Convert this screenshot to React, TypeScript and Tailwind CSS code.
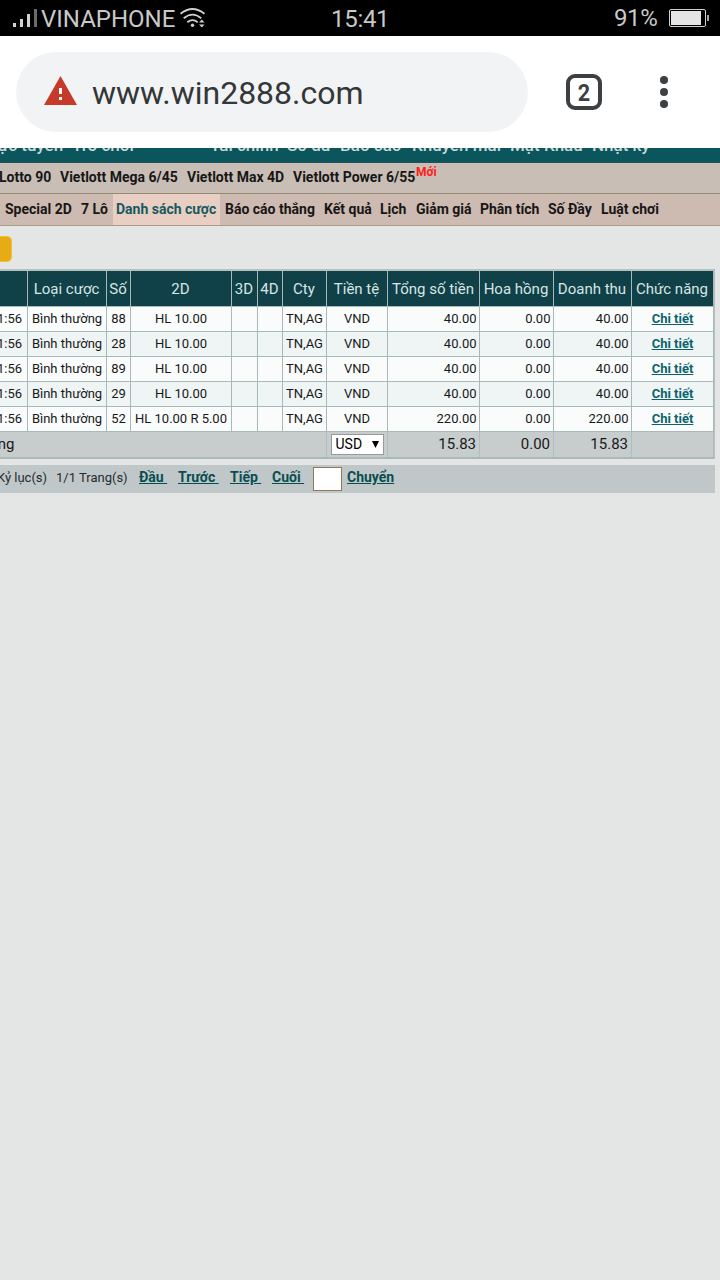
import clsx from 'clsx'

const topLinks = [
  { label: 'Trực tuyến', cls: 'ml-[-18px] w-[90px]' },
  { label: 'Trò chơi', cls: 'w-[138px]' },
  { label: 'Tài chính', cls: 'w-[77px]' },
  { label: 'Số dư', cls: 'w-[53px]' },
  { label: 'Báo cáo', cls: 'w-[72px]' },
  { label: 'Khuyến mãi', cls: 'w-[98px]' },
  { label: 'Mật Khẩu', cls: 'w-[82px]' },
  { label: 'Nhật ký', cls: 'w-[60px]' },
]

const lottoLinks = [
  { label: 'Lotto 90', cls: '-ml-px w-[61px]' },
  { label: 'Vietlott Mega 6/45', cls: 'w-[127px]' },
  { label: 'Vietlott Max 4D', cls: 'w-[106px]' },
  { label: 'Vietlott Power 6/55', cls: 'w-[123px]' },
]

const menuLinks = [
  { label: 'Special 2D', cls: 'w-[76px]' },
  { label: '7 Lô', cls: 'w-[32px]' },
  { label: 'Danh sách cược', cls: 'w-[107px] bg-[#e9cec4] pl-[3px] mr-[5px] text-[#17595f]' },
  { label: 'Báo cáo thắng', cls: 'w-[99px]' },
  { label: 'Kết quả', cls: 'w-[56px]' },
  { label: 'Lịch', cls: 'w-[36px]' },
  { label: 'Giảm giá', cls: 'w-[64px]' },
  { label: 'Phân tích', cls: 'w-[68px]' },
  { label: 'Số Đầy', cls: 'w-[53px]' },
  { label: 'Luật chơi', cls: 'w-[60px]' },
]

const headers = ['', 'Loại cược', 'Số', '2D', '3D', '4D', 'Cty', 'Tiền tệ', 'Tổng số tiền', 'Hoa hồng', 'Doanh thu', 'Chức năng']

const bets = [
  { number: '88', stake: 'HL 10.00', total: '40.00' },
  { number: '28', stake: 'HL 10.00', total: '40.00' },
  { number: '89', stake: 'HL 10.00', total: '40.00' },
  { number: '29', stake: 'HL 10.00', total: '40.00' },
  { number: '52', stake: 'HL 10.00 R 5.00', total: '220.00' },
]

const columns = 'grid grid-cols-[28px_79px_24px_101px_26px_25px_44px_61px_92px_74px_78px_82px]'
const cell = 'flex items-center justify-center border-r border-b border-[#a9b8b9] whitespace-nowrap'

function StatusBar() {
  return (
    <div className="flex h-9 items-center bg-black text-[#c8c8c8]">
      <div className="flex h-[18px] w-[41px] shrink-0 items-end gap-1 pl-[13px]">
        <i className="h-1 w-[3px] bg-[#d2d2d2]" />
        <i className="h-2 w-[3px] bg-[#d2d2d2]" />
        <i className="h-[13px] w-[3px] bg-[#d2d2d2]" />
        <i className="h-[18px] w-[3px] bg-[#6b6b6b]" />
      </div>
      <span className="w-[139px] pt-[2px] text-[24px] leading-[34px] whitespace-nowrap">VINAPHONE</span>
      <svg width="26" height="22" viewBox="0 0 26 22" fill="none" stroke="#cfcfcf" strokeWidth="1.8">
        <path d="M0.5 6.7Q12.5-2.8 24.5 6.7M3.7 11.2Q12.5 4 21.2 11.2M7.3 15.2Q12.5 11 17.7 15.2" />
        <circle cx="12.5" cy="18.3" r="1.7" fill="#cfcfcf" stroke="none" />
        <path d="M19 15.5L21.8 12.5L24.5 15.5ZM19 17.5L21.8 20.5L24.5 17.5Z" fill="#cfcfcf" stroke="none" />
      </svg>
      <span className="ml-[125px] w-[283px] pt-[2px] text-[24px] leading-[34px] tracking-[-0.3px]">15:41</span>
      <span className="w-[55px] text-[24px] leading-9 whitespace-nowrap tracking-[-0.4px]">91%</span>
      <div className="flex h-[18px] w-[37px] shrink-0 rounded-[2px] border border-[#d0d0d0] p-px">
        <div className="w-[30px] bg-[#e4e4e4]" />
      </div>
      <div className="ml-px h-[6px] w-[2px] bg-[#aaa]" />
    </div>
  )
}

function AddressBar() {
  return (
    <div className="flex h-28 items-center bg-white pl-4">
      <div className="flex h-20 w-[512px] items-center rounded-full bg-[#f1f3f5] pl-7">
        <svg width="33" height="29" viewBox="0 0 33 29" className="mb-[3px]">
          <path d="M16.5 0L33 29H0Z" fill="#c63a29" />
          <path d="M15 12h3v6h-3zM15 21h3v3h-3z" fill="#fff" />
        </svg>
        <span className="ml-[15px] pt-[2px] text-[32px] text-[#343638]">www.win2888.com</span>
      </div>
      <div className="ml-[38px] flex size-9 items-center justify-center rounded-[9px] border-4 border-[#3c4043] pt-[2px] text-[24px] leading-none font-bold text-[#3c4043]">
        <span className="scale-x-90">2</span>
      </div>
      <div className="ml-[58px] flex flex-col gap-1">
        <i className="size-2 rounded-full bg-[#3c4043]" />
        <i className="size-2 rounded-full bg-[#3c4043]" />
        <i className="size-2 rounded-full bg-[#3c4043]" />
      </div>
    </div>
  )
}

function Navigation() {
  return (
    <nav className="font-bold whitespace-nowrap text-[#171616]">
      <div className="flex h-[15px] overflow-hidden border-b border-[#245057] bg-[#0b555d] text-[17px] font-medium text-[#c9dada]">
        {topLinks.map((link) => (
          <a key={link.label} className={clsx('-mt-[15px] h-6 shrink-0 leading-6', link.cls)}>{link.label}</a>
        ))}
      </div>
      <div className="flex h-[31px] border-b border-[#938b75] bg-[#c9beb5] text-[14px] leading-[29px]">
        {lottoLinks.map((link) => (
          <a key={link.label} className={clsx('shrink-0', link.cls)}>{link.label}</a>
        ))}
        <sup className="top-0 mt-px text-[12px] leading-[16px] text-[#ff1c1c]">Mới</sup>
      </div>
      <div className="flex h-8 border-b border-[#ac9a8d] bg-[#cdbab1] pl-[5px] text-[14px] leading-[30px]">
        {menuLinks.map((link) => (
          <a key={link.label} className={clsx('shrink-0', link.cls)}>{link.label}</a>
        ))}
      </div>
    </nav>
  )
}

function BetTable() {
  return (
    <div className="w-[715px] border-t-2 border-r border-[#b5c0c0] text-[13px] text-[#171919]">
      <div className={clsx(columns, 'h-9 bg-[#104148] text-[15px] text-[#d8e5e5]')}>
        {headers.map((header, i) => (
          <div key={i} className={clsx(cell, 'pt-[2px] pr-px')}>{header}</div>
        ))}
      </div>
      {bets.map((bet, i) => (
        <div key={bet.number} className={clsx(columns, 'h-[25px]', i % 2 ? 'bg-[#eff4f5]' : 'bg-[#fafcfc]')}>
          <div className={clsx(cell, 'justify-end pr-[5px]')}>1:56</div>
          <div className={cell}>Bình thường</div>
          <div className={cell}>{bet.number}</div>
          <div className={cell}>{bet.stake}</div>
          <div className={cell} />
          <div className={cell} />
          <div className={cell}>TN,AG</div>
          <div className={cell}>VND</div>
          <div className={clsx(cell, 'justify-end pr-[2.5px]')}>{bet.total}</div>
          <div className={clsx(cell, 'justify-end pr-[2.5px]')}>0.00</div>
          <div className={clsx(cell, 'justify-end pr-[2.5px]')}>{bet.total}</div>
          <div className={cell}>
            <a className="font-bold text-[#0b646c] underline">Chi tiết</a>
          </div>
        </div>
      ))}
      <div className="grid h-[27px] grid-cols-[327px_61px_92px_74px_78px_82px] border-b-2 border-[#a9b8b9] bg-[#c7cccc] text-[15px]">
        <div className="flex items-center border-r border-[#b2bcbc]">
          <span className="-ml-[19px]">Tổng</span>
        </div>
        <div className="flex items-center justify-center border-r border-[#b2bcbc]">
          <div className="flex h-[21px] w-[53px] items-center justify-between border border-[#999] bg-white px-1 text-[14px] text-black">
            USD
            <svg width="7" height="7" viewBox="0 0 7 7"><path d="M0 0H7L3.5 7Z" /></svg>
          </div>
        </div>
        <div className="flex items-center justify-end border-r border-[#b2bcbc] pr-[3px]">15.83</div>
        <div className="flex items-center justify-end border-r border-[#b2bcbc] pr-[3px]">0.00</div>
        <div className="flex items-center justify-end border-r border-[#b2bcbc] pr-[3px]">15.83</div>
        <div className="border-r border-[#b2bcbc]" />
      </div>
    </div>
  )
}

function Pager() {
  return (
    <div className="mt-[6px] flex h-7 w-[715px] items-center bg-[#c0c7c9] text-[13px] whitespace-nowrap text-[#252b2d]">
      <span className="-ml-[3px] w-[59px] shrink-0 pb-[2px]">Kỷ lục(s)</span>
      <span className="w-[83px] shrink-0 pb-[2px]">1/1 Trang(s)</span>
      <div className="flex items-center text-[14px] font-bold whitespace-pre text-[#074e50]">
        <a className="w-[39px] pb-[3px] underline">{'Đầu '}</a>
        <a className="w-[52px] pb-[3px] underline">{'Trước '}</a>
        <a className="w-[42px] pb-[3px] underline">{'Tiếp '}</a>
        <a className="w-[41px] pb-[3px] underline">{'Cuối '}</a>
        <input className="mr-[5px] h-6 w-[29px] border border-[#927958] bg-white" />
        <a className="pb-[3px] underline">Chuyển</a>
      </div>
    </div>
  )
}

export default function App() {
  return (
    <div className="h-[1280px] w-[720px] overflow-hidden bg-[#e4e6e5] font-['Roboto','Liberation_Sans',sans-serif]">
      <StatusBar />
      <AddressBar />
      <Navigation />
      <div className="h-[43px] pt-[10px]">
        <div className="h-[26px] w-3 rounded-r-[5px] border border-l-0 border-[#f3bf35] bg-[#e5ac15]" />
      </div>
      <BetTable />
      <Pager />
    </div>
  )
}
